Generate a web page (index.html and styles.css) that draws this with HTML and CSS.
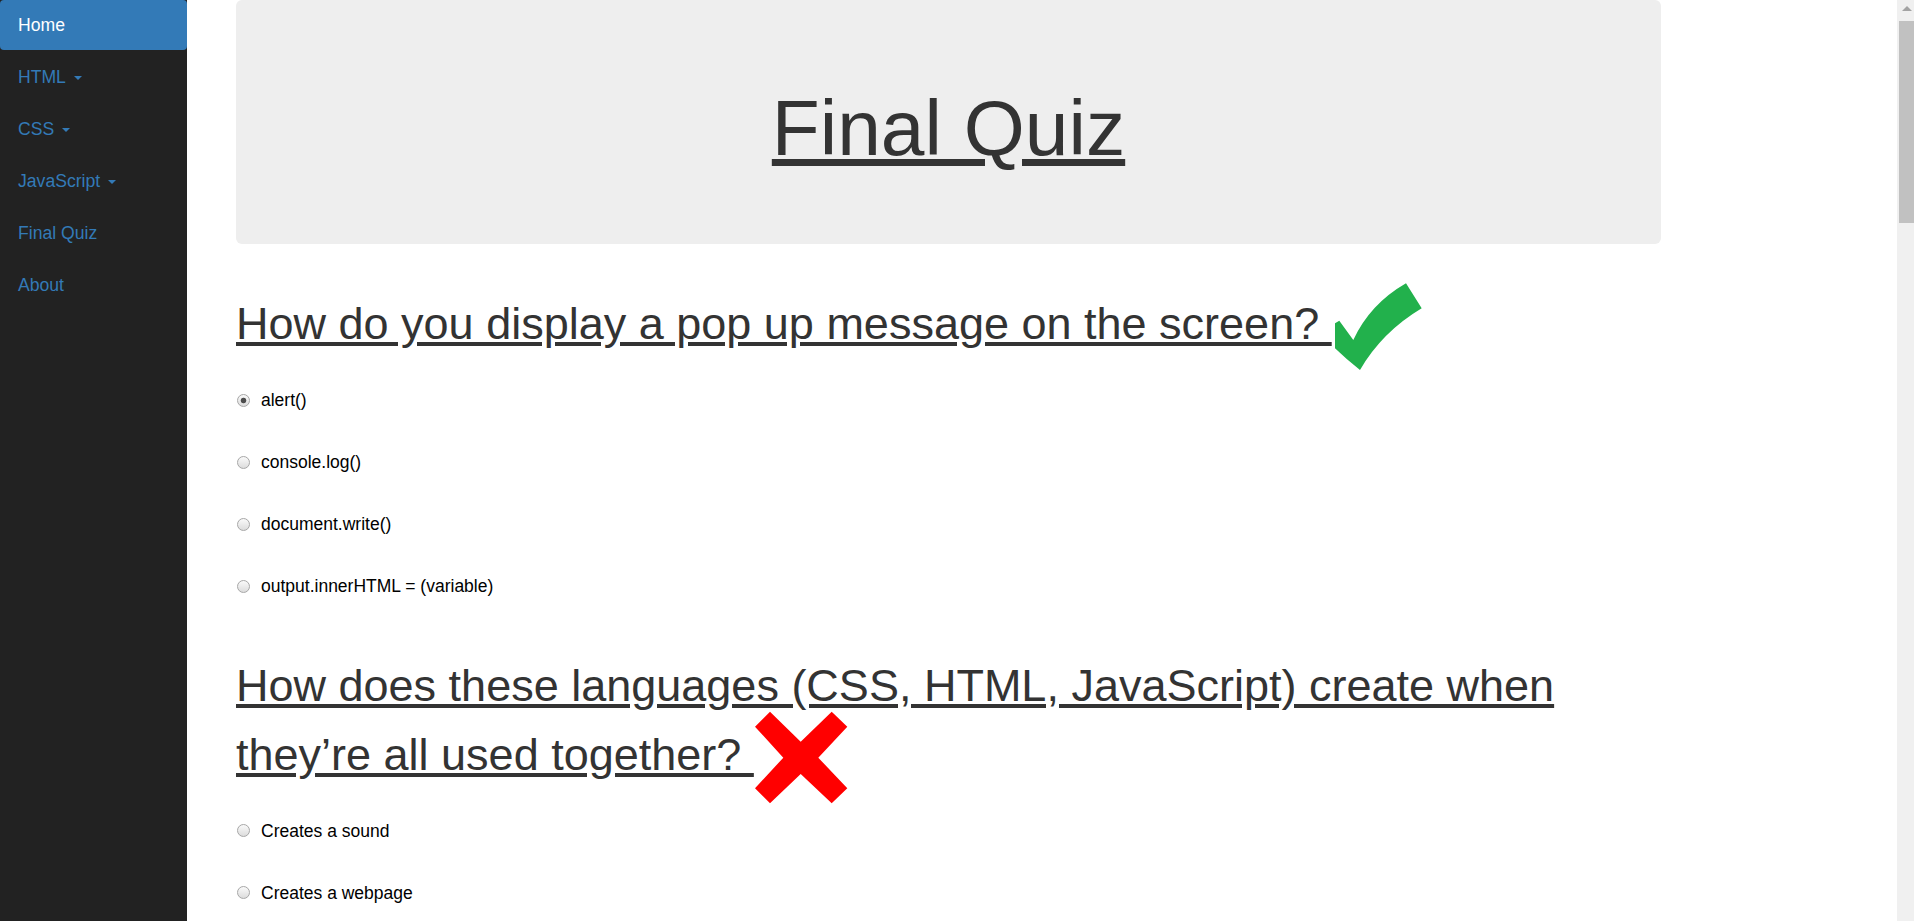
FILE: index.html
```html
<!DOCTYPE html>
<html lang="en">
<head>
<meta charset="utf-8">
<title>Final Quiz</title>
<link rel="stylesheet" href="styles.css">
</head>
<body>
<div class="page">
  <nav class="sidebar">
    <ul class="nav">
      <li class="active"><a href="#">Home</a></li>
      <li><a href="#">HTML<span class="caret"></span></a></li>
      <li><a href="#">CSS<span class="caret"></span></a></li>
      <li><a href="#">JavaScript<span class="caret"></span></a></li>
      <li><a href="#">Final Quiz</a></li>
      <li><a href="#">About</a></li>
    </ul>
  </nav>

  <main class="main">
    <div class="container">
      <div class="jumbotron">
        <h1 class="jumbo-title">Final Quiz</h1>
      </div>

      <section class="question">
        <h2 class="q-title">How do you display a pop up message on the screen? <svg class="mark" viewBox="0 0 95 95" width="95" height="95" aria-hidden="true"><path fill="#22b14c" d="M7.3 40.7 L3 43.3 L3 68.3 Q14 79 28 90 Q50 52 89.7 28.3 L74 3.3 Q38 24 21.3 60 Z"/></svg></h2>
        <div class="options">
          <label class="option"><input type="radio" name="q1" checked>alert()</label>
          <label class="option"><input type="radio" name="q1">console.log()</label>
          <label class="option"><input type="radio" name="q1">document.write()</label>
          <label class="option"><input type="radio" name="q1">output.innerHTML = (variable)</label>
        </div>
      </section>

      <section class="question">
        <h2 class="q-title">How does these languages (CSS, HTML, JavaScript) create when they’re all used together? <svg class="mark" viewBox="0 0 95 95" width="95" height="95" aria-hidden="true"><polygon fill="#ff0000" points="1,15.7 16,0.7 46.7,30.7 77.7,0.7 93.3,15.7 64.3,46.7 93.3,77.3 77.7,92.3 46.7,63 16,92.3 1,77.3 29.3,46.7"/></svg></h2>
        <div class="options">
          <label class="option"><input type="radio" name="q2">Creates a sound</label>
          <label class="option"><input type="radio" name="q2">Creates a webpage</label>
        </div>
      </section>
    </div>
  </main>

  <div class="scrollbar" aria-hidden="true">
    <div class="sb-button"><span class="sb-arrow"></span></div>
    <div class="sb-thumb"></div>
  </div>
</div>
</body>
</html>
```

FILE: styles.css
```css
html, body {
  margin: 0;
  padding: 0;
  height: 100%;
}

body {
  font-family: "Liberation Sans", Arial, sans-serif;
  color: #333;
  background: #fff;
  overflow: hidden;
}

.page {
  display: flex;
  height: 100vh;
  overflow: hidden;
}

/* Sidebar */
.sidebar {
  flex: 0 0 187px;
  background: #222;
}

.nav {
  list-style: none;
  margin: 0;
  padding: 0;
}

.nav li + li {
  margin-top: 2px;
}

.nav a {
  display: block;
  padding: 15px 18px;
  line-height: 20px;
  font-size: 17.6px;
  color: #337ab7;
  text-decoration: none;
  border-radius: 4px;
}

.nav .active a {
  background: #337ab7;
  color: #fff;
}

.caret {
  display: inline-block;
  width: 0;
  height: 0;
  margin-left: 8px;
  vertical-align: middle;
  border-top: 4px solid #337ab7;
  border-left: 4.5px solid transparent;
  border-right: 4.5px solid transparent;
}

/* Main */
.main {
  flex: 1 1 auto;
  min-width: 0;
  overflow: hidden;
}

.container {
  width: 1425px;
  margin-left: 49px;
}

.jumbotron {
  height: 244px;
  box-sizing: border-box;
  padding-top: 82px;
  background: #eee;
  border-radius: 6px;
  text-align: center;
}

.jumbo-title {
  margin: 0;
  font-size: 78.5px;
  font-weight: normal;
  line-height: 92px;
  text-decoration: underline;
  color: #333;
}

.question {
  padding-bottom: 29px;
}

.q-title {
  margin: 36px 0 0;
  font-size: 45px;
  font-weight: normal;
  line-height: 1.1;
  text-decoration: underline;
  color: #333;
}

.mark {
  vertical-align: middle;
}

.options {
  display: flex;
  flex-direction: column;
  gap: 42px;
  margin-top: 15px;
}

.option {
  display: flex;
  align-items: center;
  height: 20px;
  line-height: 20px;
  font-size: 17.5px;
  color: #000;
}

.option input {
  -webkit-appearance: none;
  appearance: none;
  box-sizing: border-box;
  width: 13px;
  height: 13px;
  margin: 0 11px 0 1px;
  border: 1px solid #a7a7a7;
  border-radius: 50%;
  background: linear-gradient(#fafafa, #dcdcdc);
}

.option input:checked {
  background:
    radial-gradient(circle, #4d4d4d 0 2.4px, rgba(77,77,77,0) 3.2px),
    linear-gradient(#fafafa, #dcdcdc);
}

/* Fake scrollbar */
.scrollbar {
  flex: 0 0 17px;
  background: #f0f0f0;
  display: flex;
  flex-direction: column;
}

.sb-button {
  height: 17px;
  display: flex;
  align-items: center;
  justify-content: center;
}

.sb-arrow {
  width: 0;
  height: 0;
  border-bottom: 5px solid #a3a3a3;
  border-left: 5px solid transparent;
  border-right: 5px solid transparent;
  margin-left: 2px;
}

.sb-thumb {
  margin-top: 4px;
  margin-left: 2px;
  height: 202px;
  background: #c1c1c1;
}
```
